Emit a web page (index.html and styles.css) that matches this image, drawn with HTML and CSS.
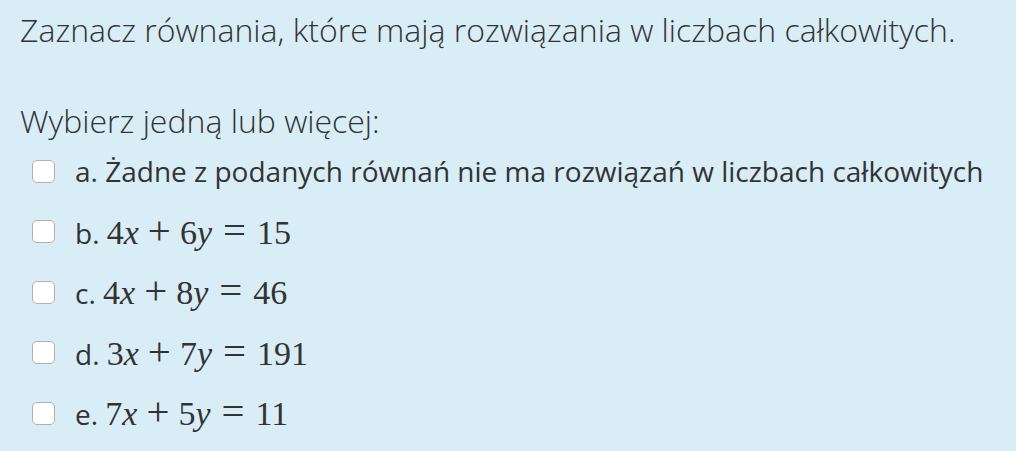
FILE: index.html
```html
<!DOCTYPE html>
<html lang="pl">
<head>
<meta charset="utf-8">
<link rel="stylesheet" href="styles.css">
</head>
<body>
<div class="question">
  <p class="qtext">Zaznacz równania, które mają rozwiązania w liczbach całkowitych.</p>
  <p class="prompt">Wybierz jedną lub więcej:</p>
  <div class="answers">
    <label class="opt"><span class="box"></span><span class="lbl">a. Żadne z podanych równań nie ma rozwiązań w liczbach całkowitych</span></label>
    <label class="opt"><span class="box"></span><span class="lbl">b. <span class="math">4<i>x</i><span class="plus">+</span>6<i>y</i><span class="eq">=</span>15</span></span></label>
    <label class="opt"><span class="box"></span><span class="lbl">c. <span class="math">4<i>x</i><span class="plus">+</span>8<i>y</i><span class="eq">=</span>46</span></span></label>
    <label class="opt"><span class="box"></span><span class="lbl">d. <span class="math">3<i>x</i><span class="plus">+</span>7<i>y</i><span class="eq">=</span>191</span></span></label>
    <label class="opt"><span class="box"></span><span class="lbl">e. <span class="math">7<i>x</i><span class="plus">+</span>5<i>y</i><span class="eq">=</span>11</span></span></label>
  </div>
</div>
</body>
</html>
```
FILE: styles.css
```css
html, body {
  margin: 0;
  padding: 0;
  background: #d9edf7;
}
body {
  font-family: "Open Sans", "Liberation Sans", sans-serif;
  color: #333;
  width: 1016px;
  height: 451px;
  overflow: hidden;
}
.question {
  padding: 9px 0 0 20px;
}
.qtext {
  margin: 0;
  font-size: 32px;
  font-weight: 300;
  line-height: 42px;
}
.prompt {
  margin: 49px 0 0 0;
  font-size: 32px;
  font-weight: 300;
  line-height: 42px;
}
.answers {
  display: flex;
  flex-direction: column;
  padding-left: 12px;
  margin-top: -1px;
}
.opt {
  display: flex;
  align-items: center;
  height: 60.5px;
}
.box {
  width: 21px;
  height: 21px;
  border: 1px solid #b0b0b0;
  border-radius: 5px;
  background: #fff;
  flex: none;
  margin-right: 20px;
}
.lbl {
  font-size: 28px;
  line-height: 40px;
  white-space: nowrap;
}
.math {
  font-family: "Liberation Serif", "Times New Roman", serif;
  font-size: 34px;
}
.math i {
  font-style: italic;
}
.plus {
  font-size: 1.2em;
  line-height: 1;
  margin: 0 9px;
}
.eq {
  font-size: 1.2em;
  line-height: 1;
  margin: 0 11px;
}
```
